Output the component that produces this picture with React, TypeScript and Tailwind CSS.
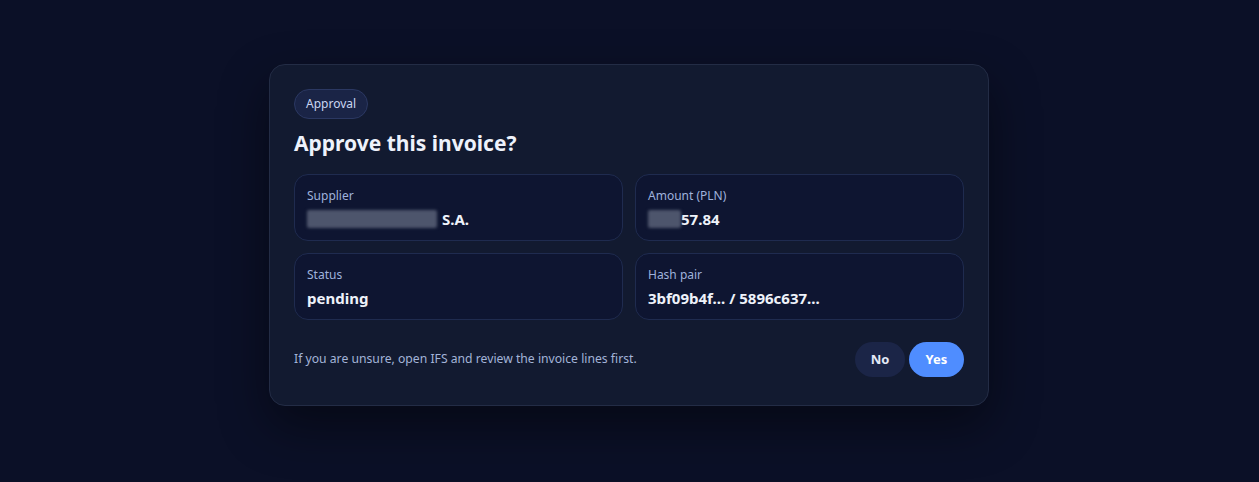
import React from 'react';

const Field: React.FC<{ label: string; children: React.ReactNode }> = ({ label, children }) => (
  <div className="rounded-[14px] border border-[#1f2b4f] bg-[#0e1531] px-3 pt-[13px] pb-[11px]">
    <div className="text-[12px] leading-4 text-[#9fb2dc]">{label}</div>
    <div className="mt-[5px] flex items-center text-[15px] font-bold leading-5 text-[#eef2fa]">{children}</div>
  </div>
);

const Redacted: React.FC<{ w: string }> = ({ w }) => (
  <span className={`inline-block h-[18px] ${w} rounded-[2px] bg-[#4d556c] blur-[1.5px]`} />
);

export default function App() {
  return (
    <div
      className="flex h-screen w-full justify-center bg-[#0b1027] pt-16 pr-px"
      style={{ fontFamily: '"Noto Sans", "Open Sans", Arial, sans-serif' }}
    >
      <div className="h-fit w-[720px] rounded-[16px] border border-[#232c45] bg-[#121a30] px-6 pt-6 pb-7 shadow-[0_20px_50px_rgba(0,0,0,0.45)]">
        <span className="inline-flex h-[30px] items-center rounded-full border border-[#2b3862] bg-[#1a2446] px-[11px] text-[12px] text-[#c9d5f2]">
          Approval
        </span>
        <h1 className="mt-[8px] text-[21px] font-bold leading-8 text-[#eef2fb]">Approve this invoice?</h1>
        <div className="mt-[15px] grid grid-cols-2 gap-3">
          <Field label="Supplier">
            <Redacted w="w-[130px]" />
            <span className="ml-[5px]">S.A.</span>
          </Field>
          <Field label="Amount (PLN)">
            <Redacted w="w-[33px]" />
            <span>57.84</span>
          </Field>
          <Field label="Status">pending</Field>
          <Field label="Hash pair">3bf09b4f... / 5896c637...</Field>
        </div>
        <div className="mt-[22px] flex items-center justify-between">
          <p className="text-[12.2px] text-[#a3b4d8]">If you are unsure, open IFS and review the invoice lines first.</p>
          <div className="flex gap-1">
            <button className="h-[35px] w-[50px] rounded-full bg-[#1b2547] text-[13px] font-bold text-[#e3e9f7]">No</button>
            <button className="h-[35px] w-[55px] rounded-full bg-[#4f8dff] text-[13px] font-bold text-white">Yes</button>
          </div>
        </div>
      </div>
    </div>
  );
}
